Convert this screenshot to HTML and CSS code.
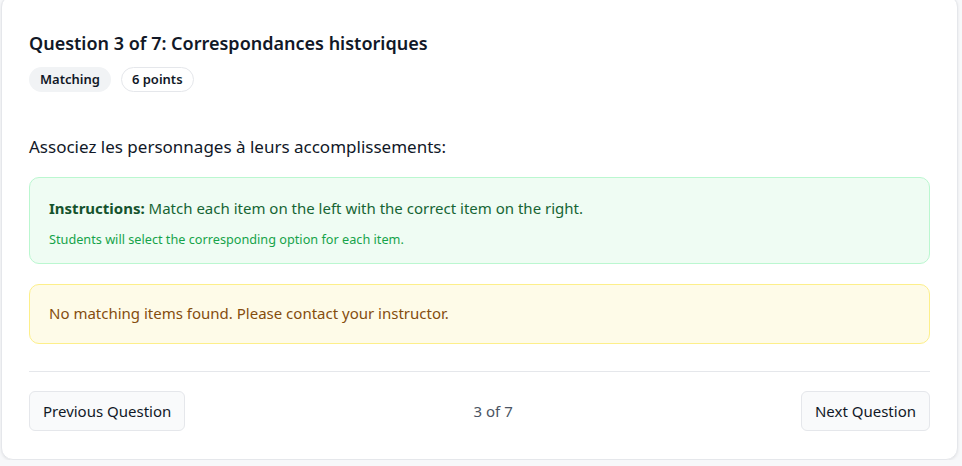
FILE: index.html
```html
<!DOCTYPE html>
<html lang="en">
<head>
<meta charset="utf-8">
<title>Question 3 of 7</title>
<link rel="stylesheet" href="styles.css">
</head>
<body>
<div class="card">
  <div class="header">
    <h2 class="title">Question 3 of 7: Correspondances historiques</h2>
    <div class="badges">
      <span class="badge badge-type">Matching</span>
      <span class="badge badge-points">6 points</span>
    </div>
  </div>
  <p class="prompt">Associez les personnages à leurs accomplissements:</p>
  <div class="notice notice-info">
    <p class="notice-main"><strong>Instructions:</strong> Match each item on the left with the correct item on the right.</p>
    <p class="notice-sub">Students will select the corresponding option for each item.</p>
  </div>
  <div class="notice notice-warn">
    <p class="notice-main">No matching items found. Please contact your instructor.</p>
  </div>
  <div class="footer">
    <button class="btn" type="button">Previous Question</button>
    <span class="progress">3 of 7</span>
    <button class="btn" type="button">Next Question</button>
  </div>
</div>
</body>
</html>
```

FILE: styles.css
```css
* { box-sizing: border-box; }

html, body {
  margin: 0;
  padding: 0;
  background: #f7f8fa;
  font-family: "Segoe UI", "Noto Sans", "Open Sans", sans-serif;
  color: #111827;
  overflow: hidden;
}

.card {
  width: 957px;
  margin: -5px 0 0 1px;
  background: #ffffff;
  border: 1px solid #e5e7eb;
  border-radius: 12px;
  box-shadow: 0 1px 3px rgba(0, 0, 0, 0.08);
  padding: 33px 27px 28px 27px;
}

.title {
  margin: 0;
  font-size: 18px;
  line-height: 28px;
  font-weight: 600;
  color: #111827;
}

.badges {
  display: flex;
  gap: 10px;
  margin-top: 10px;
}

.badge {
  display: inline-block;
  font-size: 13px;
  line-height: 17px;
  font-weight: 600;
  padding: 3px 10px;
  border-radius: 999px;
  border: 1px solid transparent;
  color: #111827;
}

.badge-type {
  background: #f1f3f5;
}

.badge-points {
  background: #ffffff;
  border-color: #e5e7eb;
}

.prompt {
  margin: 42px 0 17px 0;
  font-size: 17px;
  line-height: 26px;
  color: #111827;
}

.notice {
  border: 1px solid;
  border-radius: 10px;
}

.notice p { margin: 0; }

.notice-main {
  font-size: 15px;
  line-height: 22px;
}

.notice-info {
  background: #effcf3;
  border-color: #bbf7d0;
  padding: 19px 19px 14px 19px;
}

.notice-info .notice-main { color: #166534; }
.notice-info strong { color: #14532d; font-weight: 700; }

.notice .notice-sub {
  margin-top: 10px;
  font-size: 12.7px;
  line-height: 20px;
  color: #16a34a;
}

.notice-warn {
  margin-top: 20px;
  background: #fefbe8;
  border-color: #fdef8a;
  padding: 17px 19px 19px 19px;
}

.notice-warn .notice-main { color: #854d0e; }

.footer {
  margin-top: 27px;
  border-top: 1px solid #e5e7eb;
  padding-top: 19px;
  display: flex;
  align-items: center;
  justify-content: space-between;
}

.btn {
  font-family: inherit;
  font-size: 15px;
  line-height: 22px;
  color: #111827;
  background: #f9fafb;
  border: 1px solid #e5e7eb;
  border-radius: 6px;
  padding: 8px 13px;
  height: 40px;
}

.progress {
  font-size: 15px;
  color: #4b5563;
}
```
